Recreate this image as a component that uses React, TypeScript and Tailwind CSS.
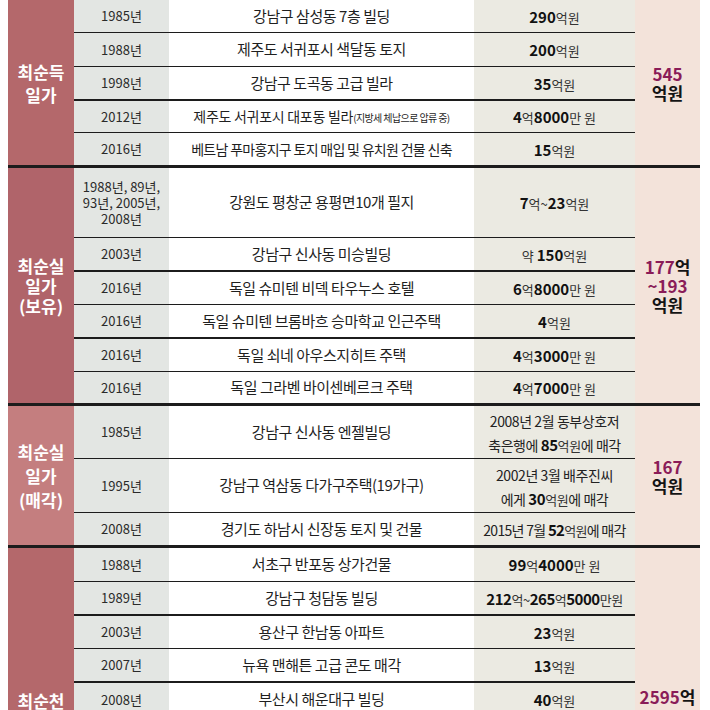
import React from 'react';

type Row = {
  year: React.ReactNode;
  place: React.ReactNode;
  amount: React.ReactNode;
  h: string;
  line: string;
};

type Group = {
  name: React.ReactNode;
  catBg: string;
  catLead: string;
  total: React.ReactNode;
  extra?: string;
  totalPad?: string;
  rows: Row[];
};

const THIN = 'border-b border-[#1c1c1c]';
const THICK = 'border-b-2 border-[#1c1c1c]';

const N = ({ c }: { c: string }) => <span className="text-[15px] font-bold text-[#111]">{c}</span>;
const U = ({ c }: { c: string }) => <span className="text-[13px] text-[#333]">{c}</span>;
const P = ({ c }: { c: string }) => <span className="text-[#8a1c58]">{c}</span>;

const groups: Group[] = [
  {
    name: <>최순득<br />일가</>,
    catBg: 'bg-[#b4686b]',
    catLead: 'leading-[23px]',
    total: <><P c="545" /><br />억원</>,
    rows: [
      { year: '1985년', place: '강남구 삼성동 7층 빌딩', amount: <><N c="290" /><U c="억원" /></>, h: 'h-[33px]', line: THIN },
      { year: '1988년', place: '제주도 서귀포시 색달동 토지', amount: <><N c="200" /><U c="억원" /></>, h: 'h-[34px]', line: THIN },
      { year: '1998년', place: '강남구 도곡동 고급 빌라', amount: <><N c="35" /><U c="억원" /></>, h: 'h-[34px]', line: THICK },
      {
        year: '2012년',
        place: (
          <span className="whitespace-nowrap text-[14px] tracking-[-0.02em]">
            제주도 서귀포시 대포동 빌라
            <span className="text-[10px] tracking-[-0.06em]">(지방세 체납으로 압류 중)</span>
          </span>
        ),
        amount: <><N c="4" /><U c="억" /><N c="8000" /><U c="만 원" /></>,
        h: 'h-[32px]',
        line: THIN,
      },
      {
        year: '2016년',
        place: <span className="whitespace-nowrap text-[14px] tracking-[-0.05em]">베트남 푸마홍지구 토지 매입 및 유치원 건물 신축</span>,
        amount: <><N c="15" /><U c="억원" /></>,
        h: 'h-[32px]',
        line: '',
      },
    ],
  },
  {
    name: <>최순실<br />일가<br />(보유)</>,
    catBg: 'bg-[#b0646a]',
    catLead: 'leading-[20px]',
    total: <><P c="177" />억<br /><P c="~193" /><br />억원</>,
    rows: [
      {
        year: <span className="leading-[16px]">1988년, 89년,<br />93년, 2005년,<br />2008년</span>,
        place: '강원도 평창군 용평면10개 필지',
        amount: <><N c="7" /><U c="억~" /><N c="23" /><U c="억원" /></>,
        h: 'h-[70px]',
        line: THIN,
      },
      { year: '2003년', place: '강남구 신사동 미승빌딩', amount: <><U c="약 " /><N c="150" /><U c="억원" /></>, h: 'h-[34px]', line: THICK },
      { year: '2016년', place: '독일 슈미텐 비덱 타우누스 호텔', amount: <><N c="6" /><U c="억" /><N c="8000" /><U c="만 원" /></>, h: 'h-[33px]', line: THIN },
      { year: '2016년', place: '독일 슈미텐 브롬바흐 승마학교 인근주택', amount: <><N c="4" /><U c="억원" /></>, h: 'h-[34px]', line: THICK },
      { year: '2016년', place: '독일 쇠네 아우스지히트 주택', amount: <><N c="4" /><U c="억" /><N c="3000" /><U c="만 원" /></>, h: 'h-[33px]', line: THIN },
      { year: '2016년', place: '독일 그라벤 바이센베르크 주택', amount: <><N c="4" /><U c="억" /><N c="7000" /><U c="만 원" /></>, h: 'h-[31px]', line: '' },
    ],
  },
  {
    name: <>최순실<br />일가<br />(매각)</>,
    catBg: 'bg-[#c47e7f]',
    catLead: 'leading-[24px]',
    total: <><P c="167" /><br />억원</>,
    rows: [
      {
        year: '1985년',
        place: '강남구 신사동 엔젤빌딩',
        amount: (
          <span className="text-[14px] leading-[19px] tracking-[-0.03em] text-[#222]">
            2008년 2월 동부상호저<br />축은행에 <N c="85" /><U c="억원" />에 매각
          </span>
        ),
        h: 'h-[53px]',
        line: THIN,
      },
      {
        year: '1995년',
        place: '강남구 역삼동 다가구주택(19가구)',
        amount: (
          <span className="text-[14px] leading-[19px] tracking-[-0.03em] text-[#222]">
            2002년 3월 배주진씨<br />에게 <N c="30" /><U c="억원" />에 매각
          </span>
        ),
        h: 'h-[54px]',
        line: THIN,
      },
      {
        year: '2008년',
        place: '경기도 하남시 신장동 토지 및 건물',
        amount: (
          <span className="whitespace-nowrap text-[14px] tracking-[-0.05em] text-[#222]">
            2015년 7월 <N c="52" /><U c="억원" />에 매각
          </span>
        ),
        h: 'h-[32px]',
        line: '',
      },
    ],
  },
  {
    name: <>최순천<br />일가</>,
    catBg: 'bg-[#b4686b]',
    catLead: 'leading-[23px]',
    total: <><P c="2595" />억<br /><P c="~2663" /><br />억원</>,
    extra: 'min-h-[330px]',
    totalPad: 'pt-[8px]',
    rows: [
      { year: '1988년', place: '서초구 반포동 상가건물', amount: <><N c="99" /><U c="억" /><N c="4000" /><U c="만 원" /></>, h: 'h-[34px]', line: THIN },
      { year: '1989년', place: '강남구 청담동 빌딩', amount: <span className="whitespace-nowrap tracking-[-0.03em]"><N c="212" /><U c="억~" /><N c="265" /><U c="억" /><N c="5000" /><U c="만원" /></span>, h: 'h-[34px]', line: THICK },
      { year: '2003년', place: '용산구 한남동 아파트', amount: <><N c="23" /><U c="억원" /></>, h: 'h-[33px]', line: THIN },
      { year: '2007년', place: '뉴욕 맨해튼 고급 콘도 매각', amount: <><N c="13" /><U c="억원" /></>, h: 'h-[34px]', line: THICK },
      { year: '2008년', place: '부산시 해운대구 빌딩', amount: <><N c="40" /><U c="억원" /></>, h: 'h-[33px]', line: '' },
    ],
  },
];

export default function App() {
  return (
    <div className="w-[710px] h-[710px] overflow-hidden bg-white pl-2 font-['Noto_Sans_CJK_KR',sans-serif]">
      <div className="w-[692px]">
        {groups.map((g, gi) => (
          <div key={gi} className={`flex border-b-[3px] border-[#1c1c1c] ${g.extra ?? ''}`}>
            <div className={`w-[66px] shrink-0 flex items-center justify-center text-center text-[17px] font-bold text-white ${g.catBg} ${g.catLead}`}>
              <div>{g.name}</div>
            </div>
            <div className="flex w-[561px] flex-col">
              {g.rows.map((r, ri) => (
                <div key={ri} className={`flex ${r.h} ${r.line}`}>
                  <div className="flex w-[95px] items-center justify-center bg-[#e3e6e3] text-center text-[13px] text-[#2a2a2a]">
                    {r.year}
                  </div>
                  <div className="flex w-[305px] items-center justify-center bg-white text-center text-[15px] tracking-[-0.03em] text-[#1f1f1f]">
                    {r.place}
                  </div>
                  <div className="flex w-[161px] items-center justify-center bg-[#ebeae2] text-center">
                    <div>{r.amount}</div>
                  </div>
                </div>
              ))}
              <div className="flex flex-1">
                <div className="w-[95px] bg-[#e3e6e3]" />
                <div className="w-[305px] bg-white" />
                <div className="w-[161px] bg-[#ebeae2]" />
              </div>
            </div>
            <div className={`flex w-[65px] shrink-0 items-center justify-center bg-[#f3e3da] text-center text-[17px] font-bold leading-[19px] text-[#141414] ${g.totalPad ?? ''}`}>
              <div>{g.total}</div>
            </div>
          </div>
        ))}
      </div>
    </div>
  );
}
